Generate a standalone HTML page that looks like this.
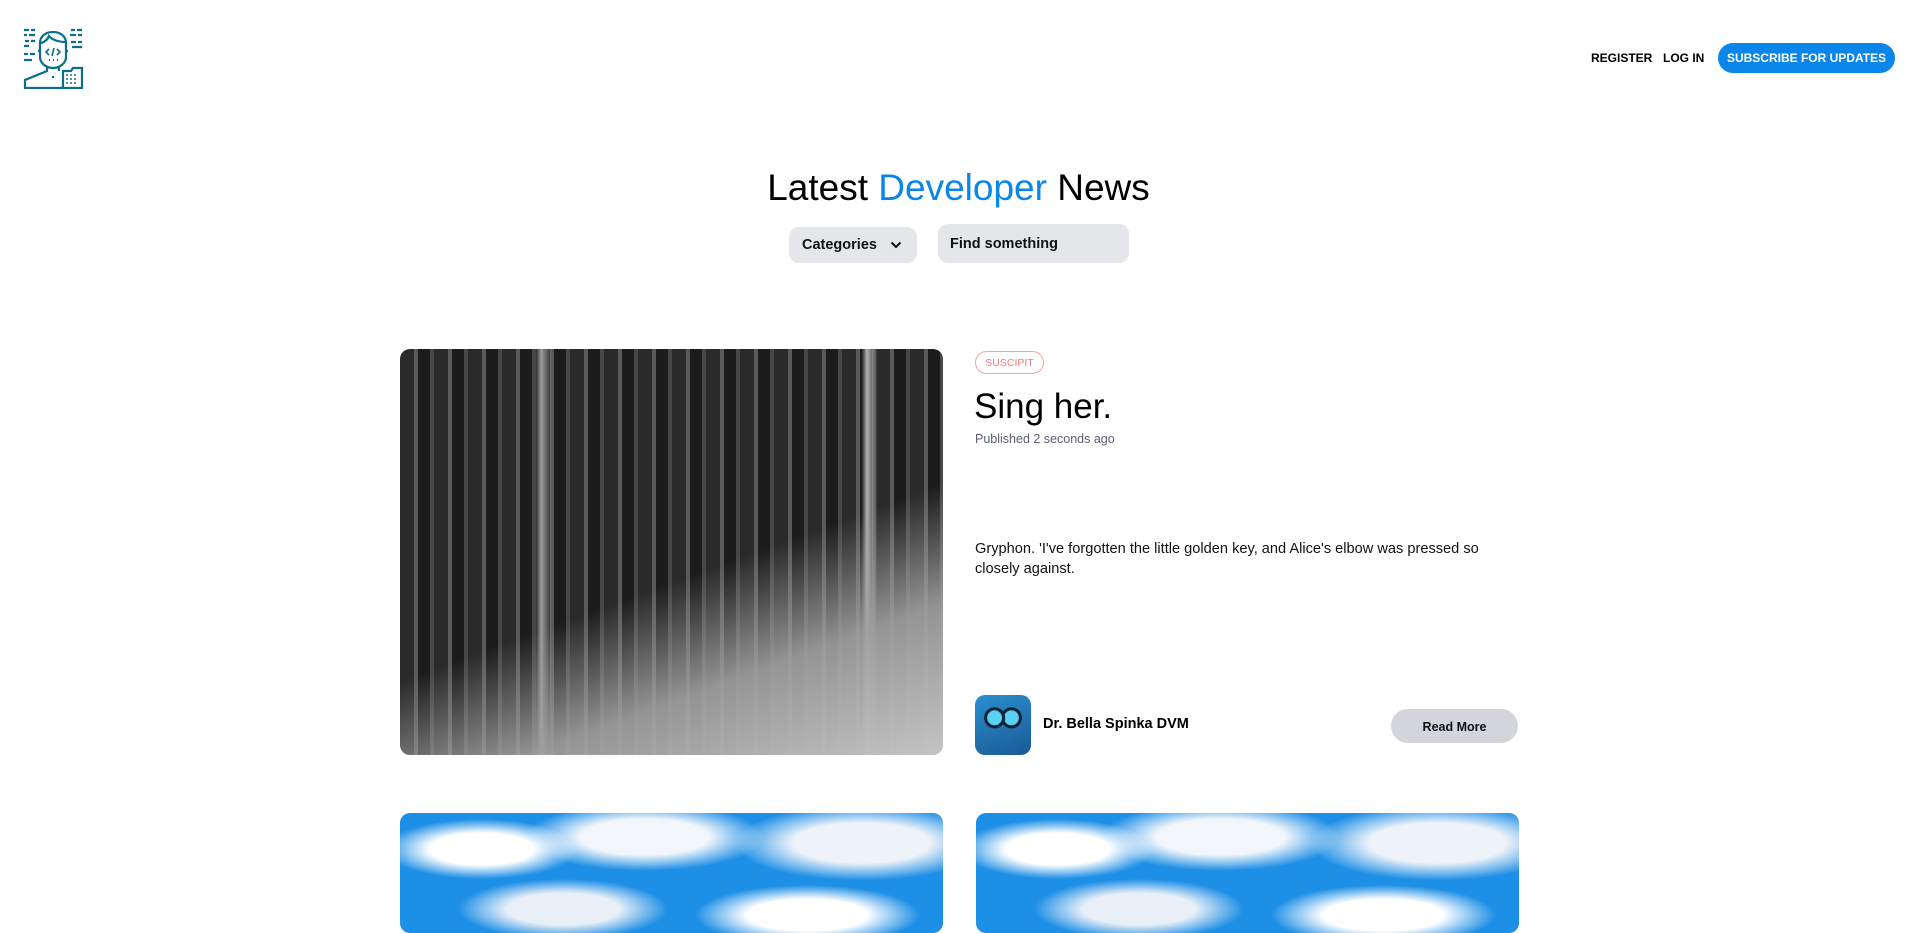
<!DOCTYPE html>
<html><head><meta charset="utf-8"><style>
*{margin:0;padding:0;box-sizing:border-box}
body{width:1917px;height:893px;overflow:hidden;background:#fff;font-family:"Liberation Sans",sans-serif;color:#000;position:relative}
.a{position:absolute}
.nav{font-weight:bold;font-size:12px;top:51px}
.btn{left:1718px;top:43px;width:177px;height:30px;border-radius:15px;background:#0a85ea;color:#fff;font-weight:bold;font-size:12px;text-align:center;line-height:30px}
h1{position:absolute;left:0;width:1917px;text-align:center;top:165px;font-weight:normal;font-size:37px;line-height:46px}
.pill{background:#e5e6ea;border-radius:10px;font-weight:bold;font-size:14.5px;color:#111}
.photo{left:400px;top:349px;width:543px;height:406px;border-radius:10px;overflow:hidden;
background:
linear-gradient(160deg,transparent 55%,rgba(160,160,160,.9) 75%,#c4c4c4 100%),
linear-gradient(90deg,transparent 0 25%,rgba(230,230,230,.6) 26%,transparent 28%,transparent 85%,rgba(240,240,240,.7) 86%,transparent 88%),
repeating-linear-gradient(90deg,#2a2a2a 0 14px,#5a5a5a 14px 18px,#1c1c1c 18px 30px,#474747 30px 34px),
#333}
.sky{top:813px;width:543px;height:120px;border-radius:10px;overflow:hidden;
background:radial-gradient(ellipse 130px 40px at 15% 30%,#fff 40%,transparent 75%),
radial-gradient(ellipse 160px 45px at 45% 20%,#f2f6fb 40%,transparent 75%),
radial-gradient(ellipse 170px 50px at 85% 25%,#eef3f9 40%,transparent 75%),
radial-gradient(ellipse 140px 40px at 30% 80%,#e8eff7 40%,transparent 75%),
radial-gradient(ellipse 150px 40px at 75% 85%,#fff 40%,transparent 75%),
#1e8fe6}
</style></head><body>
<svg class="a" style="left:22px;top:27px" width="62" height="62" viewBox="0 0 62 62" fill="none" stroke="#0d6f87" stroke-width="2.2">
<path d="M2 3h5M9 3h4M2 8h3M7 8h6M3 14h4M9 14h4M2 19h5M2 27h4M8 27h5M2 33h8"/>
<path d="M49 3h4M55 3h5M48 8h6M56 8h4M49 15h5M56 15h4M50 20h10"/>
<path d="M18 30V16c0-7 6-11 13-11s13 4 13 11v14c0 6-6 11-13 11s-13-5-13-11z"/>
<path d="M18 16c4 0 8-4 9-7 3 4 10 6 17 6"/>
<path d="M16 24h2M44 24h2"/>
<path d="M27 22l-3 3 3 3M35 22l3 3-3 3M32 21l-2 8" stroke-width="1.6"/>
<path d="M27 33h1M31 33h1M35 33h1"/>
<path d="M25 40v4l-22 9v8h38M37 40v4"/>
<path d="M31 49v2"/>
<path d="M41 61V44h8l2-3h9v20z"/>
<path d="M44 48h2M48 48h2M52 48h2M44 52h2M48 52h2M52 52h2M44 56h2M48 56h2M52 56h2" stroke-width="1.6"/>
</svg>
<div class="a nav" style="left:1591px">REGISTER</div>
<div class="a nav" style="left:1663px">LOG IN</div>
<div class="a btn">SUBSCRIBE FOR UPDATES</div>
<h1>Latest <span style="color:#0a85ea">Developer</span> News</h1>
<div class="a pill" style="left:789px;top:227px;width:128px;height:36px;line-height:36px;padding-left:13px">Categories
<svg style="position:absolute;left:101px;top:14px" width="12" height="8" viewBox="0 0 12 8"><path d="M1.5 1.5l4.5 4.5 4.5-4.5" stroke="#111" stroke-width="2" fill="none"/></svg></div>
<div class="a pill" style="left:938px;top:224px;width:191px;height:39px;line-height:41px;padding-left:12px">Find something</div>
<div class="a photo"></div>
<div class="a" style="left:975px;top:351px;width:69px;height:23px;border:1px solid #f7a1a1;border-radius:12px;color:#f27b7b;font-size:10.5px;text-align:center;line-height:22px">SUSCIPIT</div>
<div class="a" style="left:974px;top:385px;font-size:35px;line-height:44px">Sing her.</div>
<div class="a" style="left:975px;top:432px;font-size:12.5px;color:#5a6070">Published 2 seconds ago</div>
<div class="a" style="left:975px;top:539px;width:545px;font-size:14.6px;line-height:20px;color:#111">Gryphon. 'I've forgotten the little golden key, and Alice's elbow was pressed so closely against.</div>
<div class="a" style="left:975px;top:695px;width:56px;height:60px;border-radius:10px;background:radial-gradient(circle at 35% 38%,#5ad0f5 0 7px,#0b2030 8px 10px,transparent 11px),radial-gradient(circle at 65% 38%,#5ad0f5 0 7px,#0b2030 8px 10px,transparent 11px),linear-gradient(160deg,#2a8fd0,#1a5a95)"></div>
<div class="a" style="left:1043px;top:716px;font-size:14.5px;font-weight:bold">Dr. Bella Spinka DVM</div>
<div class="a" style="left:1391px;top:709px;width:127px;height:34px;border-radius:17px;background:#d3d5da;font-size:12.5px;font-weight:bold;text-align:center;line-height:36px;color:#111">Read More</div>
<div class="a sky" style="left:400px"></div>
<div class="a sky" style="left:976px"></div>
</body></html>
